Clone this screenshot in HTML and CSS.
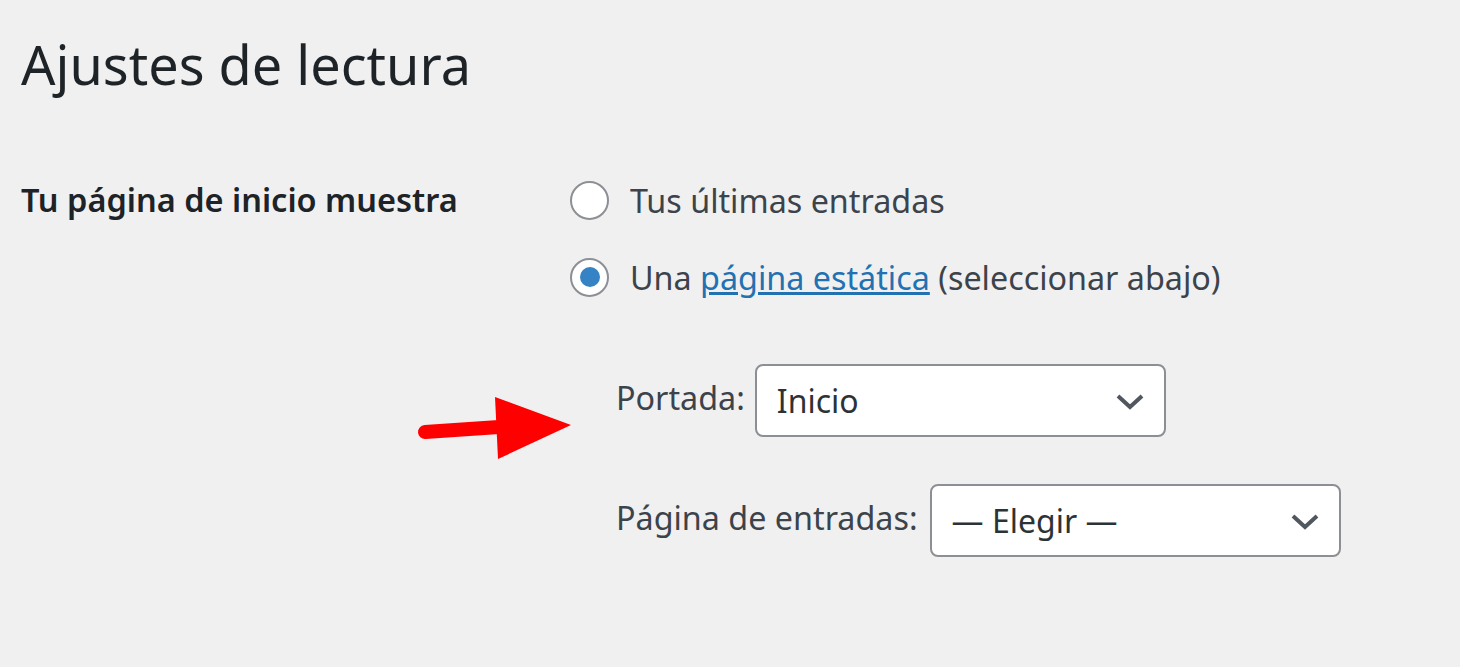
FILE: index.html
```html
<!DOCTYPE html>
<html lang="es">
<head>
  <meta charset="UTF-8" />
  <meta name="viewport" content="width=device-width, initial-scale=1.0" />
  <title>Ajustes de lectura</title>
  <link rel="stylesheet" href="styles.css">
</head>
<body>
  <div class="wrap">
    <h1>Ajustes de lectura</h1>

    <div class="form-row">
      <div class="row-label">Tu página de inicio muestra</div>
      <div class="row-field">
        <label class="radio-line">
          <span class="radio"></span>
          <span>Tus últimas entradas</span>
        </label>
        <label class="radio-line">
          <span class="radio checked"></span>
          <span>Una <a href="#">página estática</a> (seleccionar abajo)</span>
        </label>

        <div class="page-options">
          <svg class="arrow" width="170" height="85" viewBox="0 0 170 85">
            <line x1="20" y1="52" x2="94" y2="47" stroke="#ff0000" stroke-width="14" stroke-linecap="round" />
            <polygon points="90,17 166,45 93,79" fill="#ff0000" />
          </svg>
          <div class="option-line">
            <span class="option-label">Portada:</span>
            <div class="select">
              <span>Inicio</span>
              <svg class="chevron" width="28" height="16" viewBox="0 0 28 16">
                <polyline points="2,2 14,13 26,2" fill="none" stroke="#50575e" stroke-width="4" />
              </svg>
            </div>
          </div>
          <div class="option-line">
            <span class="option-label">Página de entradas:</span>
            <div class="select">
              <span>— Elegir —</span>
              <svg class="chevron" width="28" height="16" viewBox="0 0 28 16">
                <polyline points="2,2 14,13 26,2" fill="none" stroke="#50575e" stroke-width="4" />
              </svg>
            </div>
          </div>
        </div>
      </div>
    </div>
  </div>
</body>
</html>
```

FILE: styles.css
```css
body {
  font-family: 'Noto Sans', 'Open Sans', sans-serif;
  background: #f0f0f1;
  color: #3c434a;
  margin: 0;
  padding: 0;
}
.wrap {
  padding: 34px 21px;
}
h1 {
  font-size: 54px;
  font-weight: 400;
  line-height: 60px;
  color: #1d2327;
  margin: 0;
}
.form-row {
  display: flex;
  margin-top: 86px;
}
.row-label {
  width: 549px;
  font-size: 32.5px;
  font-weight: 600;
  color: #1d2327;
  line-height: 40px;
}
.row-field {
  display: flex;
  flex-direction: column;
  font-size: 32.3px;
  line-height: 40px;
}
.radio-line {
  display: flex;
  align-items: center;
  gap: 21px;
  margin-bottom: 37px;
}
.radio {
  width: 35px;
  height: 35px;
  border: 2px solid #8c8f94;
  border-radius: 50%;
  background: #fff;
  display: flex;
  align-items: center;
  justify-content: center;
}
.radio.checked::after {
  content: "";
  width: 20px;
  height: 20px;
  border-radius: 50%;
  background: #3582c4;
}
a {
  color: #2271b1;
  text-decoration: underline;
}
.page-options {
  position: relative;
  display: flex;
  flex-direction: column;
  gap: 47px;
  padding-left: 46px;
  margin-top: 30px;
}
.arrow {
  position: absolute;
  left: -165px;
  top: 16px;
}
.option-line {
  display: flex;
  align-items: center;
  gap: 12px;
}
.option-label {
  margin-bottom: 7px;
}
.option-line:first-of-type .option-label {
  margin-right: -2px;
}
.select {
  width: 411px;
  height: 73px;
  background: #fff;
  border: 2px solid #8c8f94;
  border-radius: 8px;
  display: flex;
  align-items: center;
  justify-content: space-between;
  padding: 0 20px;
  box-sizing: border-box;
  color: #2c3338;
  font-size: 32px;
}
.chevron {
  margin-top: 2px;
}
```
